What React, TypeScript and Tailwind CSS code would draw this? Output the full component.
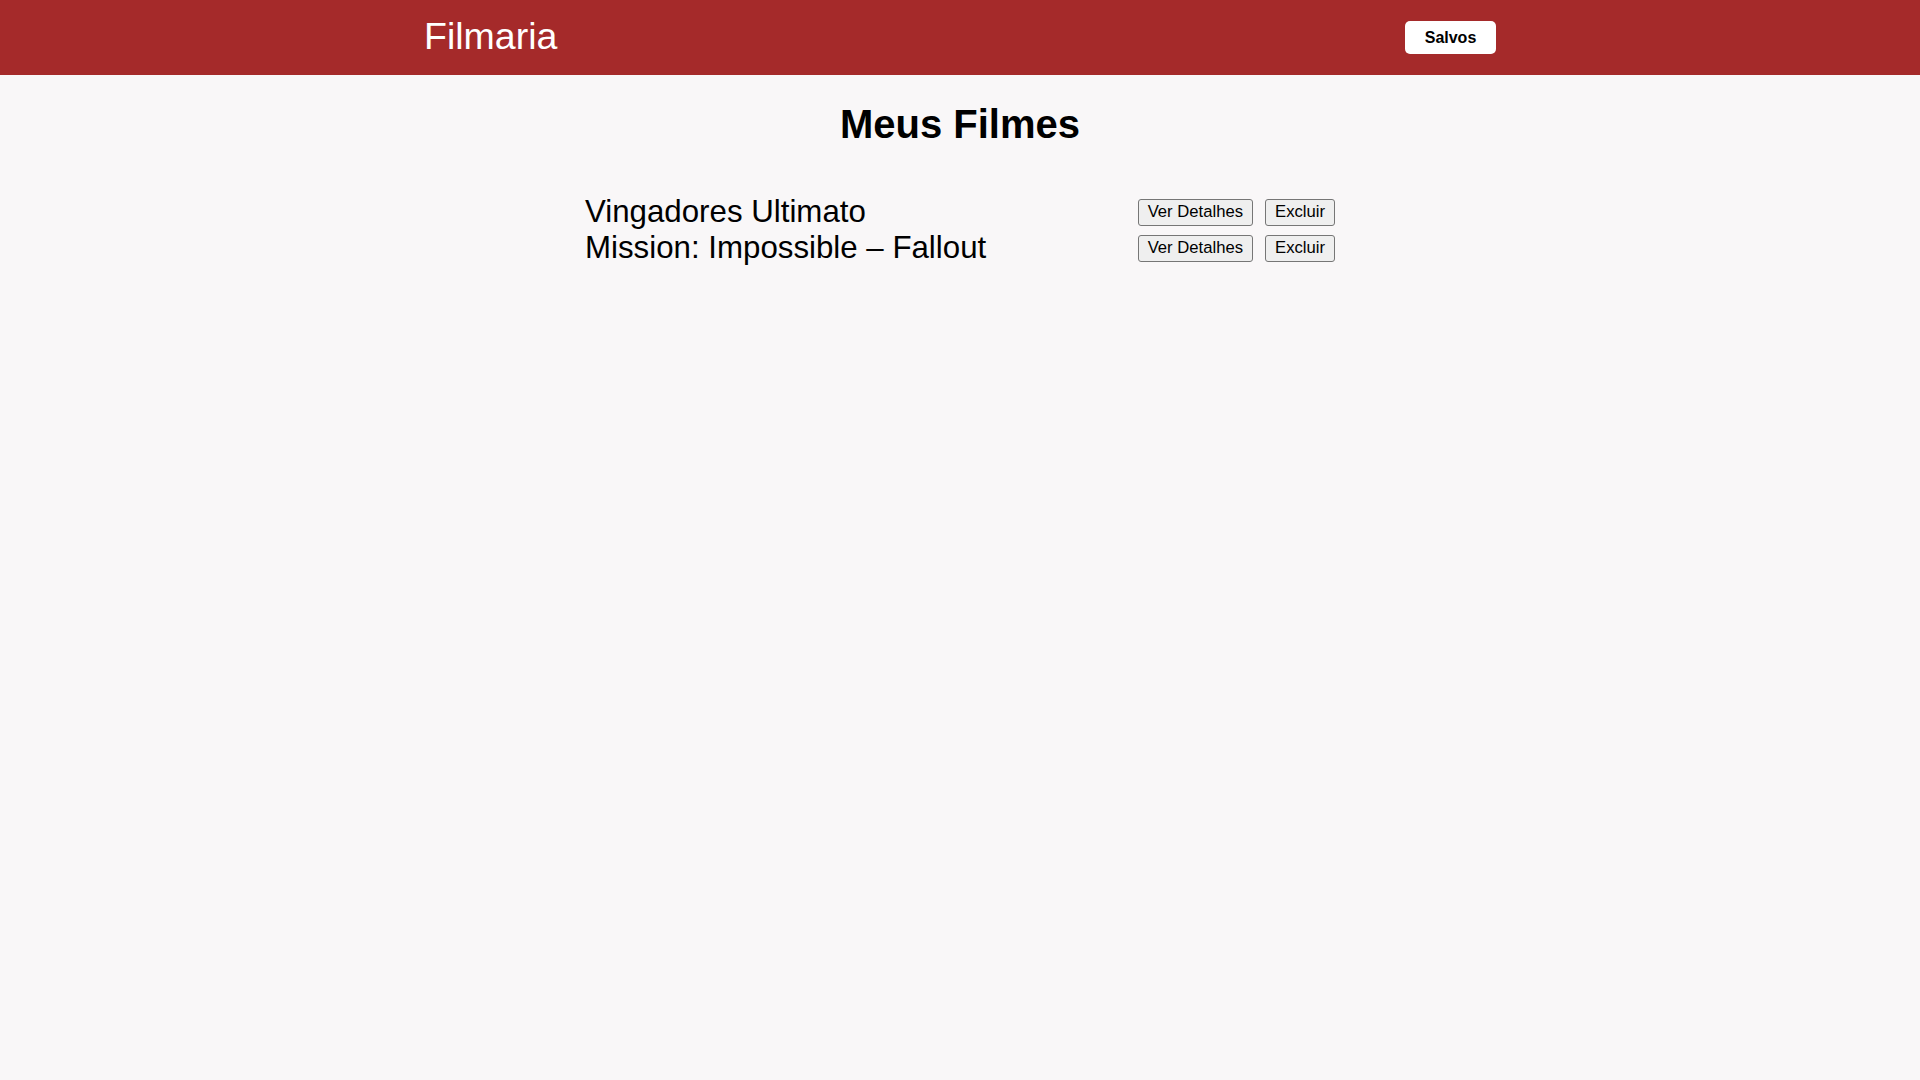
import React from "react";

const movies = ["Vingadores Ultimato", "Mission: Impossible – Fallout"];

export default function App() {
  return (
    <div className="min-h-screen w-full bg-[#f9f7f8] text-black" style={{ fontFamily: '"Liberation Sans", Arial, sans-serif' }}>
      <header className="h-[75px] w-full bg-[#a52a2a]">
        <div className="mx-auto flex h-full w-[1072px] items-center justify-between">
          <span className="text-[37.5px] leading-none text-white pb-[1px]">Filmaria</span>
          <button className="h-[33px] w-[91px] rounded-[5px] bg-white text-[16px] font-bold text-black">Salvos</button>
        </div>
      </header>
      <main className="flex flex-col items-center">
        <h1 className="mt-[26px] text-[40px] font-bold leading-[46px]">Meus Filmes</h1>
        <ul className="mt-[47px] w-[750px]">
          {movies.map((m) => (
            <li key={m} className="flex h-[36px] items-center justify-between">
              <span className="text-[31.25px] leading-[36px]">{m}</span>
              <div className="flex items-center gap-[12px]">
                <button className="h-[27px] rounded-[3px] border border-[#767676] bg-[#efefef] px-[9px] text-[16.67px] leading-none text-black">Ver Detalhes</button>
                <button className="h-[27px] rounded-[3px] border border-[#767676] bg-[#efefef] px-[9px] text-[16.67px] leading-none text-black">Excluir</button>
              </div>
            </li>
          ))}
        </ul>
      </main>
    </div>
  );
}
